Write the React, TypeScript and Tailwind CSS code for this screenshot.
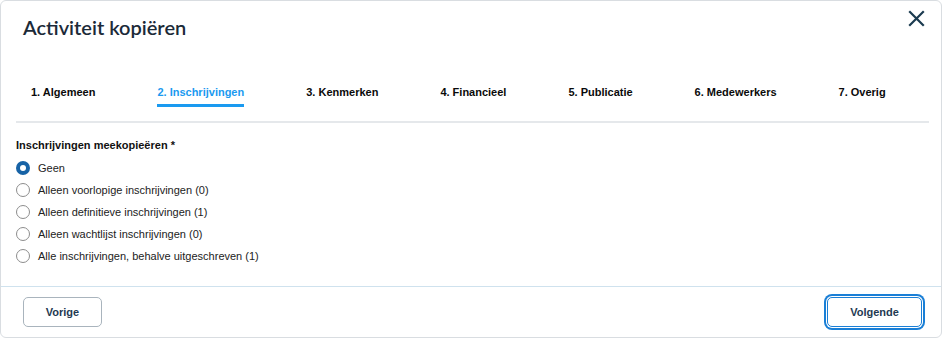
import React from 'react';

const tabs = [
    '1. Algemeen',
    '2. Inschrijvingen',
    '3. Kenmerken',
    '4. Financieel',
    '5. Publicatie',
    '6. Medewerkers',
    '7. Overig',
];

const options = [
    'Geen',
    'Alleen voorlopige inschrijvingen (0)',
    'Alleen definitieve inschrijvingen (1)',
    'Alleen wachtlijst inschrijvingen (0)',
    'Alle inschrijvingen, behalve uitgeschreven (1)',
];

export default function App() {
    const [activeTab] = React.useState(1);
    const [selected, setSelected] = React.useState(0);

    return (
        <div className="w-[945px] h-[338px] bg-white font-['Liberation_Sans',Arial,sans-serif]">
            <div className="w-[942px] h-[338px] border border-[#d9dde1] rounded-[6px] bg-white flex flex-col">
                {/* Header */}
                <div className="flex justify-between items-start pt-[8px] pl-[22px] pr-[15px]">
                    <h2 className="mt-[4px] text-[20px] leading-[28px] font-semibold text-[#1b2a38] font-['Lato','Open_Sans',sans-serif]">
                        Activiteit kopiëren
                    </h2>
                    <button className="w-[19px] h-[19px] flex items-center justify-center text-[#1b3b50]">
                        <svg width="17" height="17" viewBox="0 0 17 17" fill="none" stroke="currentColor" strokeWidth="2.2" strokeLinecap="square">
                            <path d="M2 2L15 15M15 2L2 15" />
                        </svg>
                    </button>
                </div>

                {/* Tabs */}
                <div className="flex gap-[62px] pl-[30px] mt-[43px]">
                    {tabs.map((t, i) => (
                        <div key={t} className="flex flex-col">
                            <span className={`text-[11px] leading-[16px] font-bold ${i === activeTab ? 'text-[#1a9af0]' : 'text-[#0a0a0a]'}`}>{t}</span>
                            <div className={`mt-[4px] h-[3px] ${i === activeTab ? 'bg-[#1a9af0]' : 'bg-transparent'}`} />
                        </div>
                    ))}
                </div>
                <div className="ml-[15px] mr-[12px] mt-[14px] h-[2px] bg-[#e5e8eb]" />

                {/* Body */}
                <div className="pl-[15px] pt-[14px]">
                    <div className="text-[11px] leading-[16px] font-bold text-[#111]">Inschrijvingen meekopieëren *</div>
                    <div className="mt-[4px] flex flex-col">
                        {options.map((o, i) => (
                            <label key={o} className="h-[22px] flex items-center gap-[8px] cursor-pointer" onClick={() => setSelected(i)}>
                                {i === selected ? (
                                    <span className="w-[14px] h-[14px] rounded-full bg-[#1763a6] flex items-center justify-center">
                                        <span className="w-[6px] h-[6px] rounded-full bg-white" />
                                    </span>
                                ) : (
                                    <span className="w-[14px] h-[14px] rounded-full border border-[#8d8d8d] bg-white" />
                                )}
                                <span className="text-[11px] leading-[16px] text-[#222]">{o}</span>
                            </label>
                        ))}
                    </div>
                </div>

                <div className="flex-1" />

                {/* Footer */}
                <div className="h-[51px] border-t border-[#cfe2ee] flex items-center justify-between pl-[22px] pr-[19px]">
                    <button className="w-[79px] h-[30px] rounded-[5px] border border-[#a9b4bd] bg-white text-[11px] font-bold text-[#1f3a52]">
                        Vorige
                    </button>
                    <button className="w-[95px] h-[30px] rounded-[5px] border border-[#1a7fd6] ring-2 ring-[#1a7fd6] ring-offset-1 bg-white text-[11px] font-bold text-[#1f3a52]">
                        Volgende
                    </button>
                </div>
            </div>
        </div>
    );
}
